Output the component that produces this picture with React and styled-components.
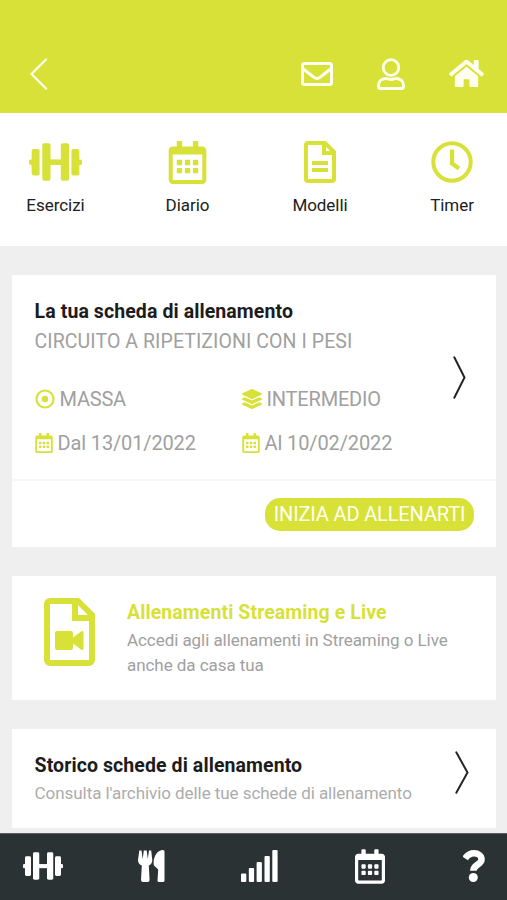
import React from 'react';
import styled, { createGlobalStyle } from 'styled-components';
import {
  FaHome,
  FaLayerGroup,
  FaRegCalendarAlt,
  FaRegEnvelope,
} from 'react-icons/fa';

const lime = '#d8e138';

const GlobalStyle = createGlobalStyle`
  * { box-sizing: border-box; }
  body { margin: 0; background: #efefef; font-family: Roboto, "Liberation Sans", sans-serif; }
  svg { display: block; flex: none; }
`;

const Screen = styled.div`
  width: 507px;
  height: 900px;
  display: flex;
  flex-direction: column;
  overflow: hidden;
  background: #efefef;
`;

const TopBar = styled.header`
  height: 113px;
  padding: 34px 23px 0 30px;
  display: flex;
  align-items: center;
  justify-content: space-between;
  flex: none;
  background: ${lime};
  color: #fffff0;
`;

const TopActions = styled.div`
  display: grid;
  grid-template-columns: 32px 28px 35px;
  column-gap: 44px;
  align-items: center;
  justify-items: center;
`;

const Shortcuts = styled.nav`
  height: 133px;
  flex: none;
  display: grid;
  grid-template-columns: 111px 153px 112px 152px;
  padding-top: 27px;
  background: #fff;
`;

const Shortcut = styled.div`
  display: flex;
  flex-direction: column;
  align-items: center;
  gap: 11px;
  color: #202020;
  font-size: 17px;
  line-height: 20px;
  letter-spacing: -0.05px;
`;

const ShortcutIcon = styled.div`
  height: 44px;
  display: flex;
  align-items: center;
  color: ${lime};
`;

const Cards = styled.main`
  flex: 1;
  padding: 29px 11px 0 12px;
  display: flex;
  flex-direction: column;
  gap: 29px;
  min-height: 0;
`;

const Card = styled.section`
  height: ${(p) => p.$height}px;
  flex: none;
  background: #fff;
`;

const PlanBody = styled.div`
  height: 206px;
  border-bottom: 2px solid #f8f8f8;
  padding: 24px 30px 0 22.600px;
  display: flex;
  justify-content: space-between;
`;

const PlanArrow = styled.div`
  padding-top: 57px;
`;

const Title = styled.h2`
  margin: 0;
  font-size: 19.500px;
  line-height: 26px;
  font-weight: 700;
  letter-spacing: ${(p) => p.$spacing || 0}px;
  color: ${(p) => p.$color || '#1c1c1c'};
  white-space: nowrap;
`;

const Subtitle = styled.div`
  margin-top: 4px;
  font-size: 19.500px;
  line-height: 26px;
  letter-spacing: 0.08px;
  color: #a0a0a0;
  white-space: nowrap;
`;

const Details = styled.div`
  margin-top: 31px;
  display: grid;
  grid-template-columns: 207px auto;
  row-gap: 18px;
`;

const Detail = styled.div`
  display: flex;
  align-items: center;
  gap: 5px;
  height: 26px;
  color: #a0a0a0;
  font-size: 20px;
  letter-spacing: ${(p) => p.$spacing || 0}px;
  white-space: nowrap;
  svg { color: ${lime}; }
`;

const SmallCalendar = styled(FaRegCalendarAlt)`
  width: 18px;
  height: 20px;
`;

const PlanFooter = styled.div`
  height: 66px;
  padding: 0 22px 0 0;
  display: flex;
  align-items: center;
  justify-content: flex-end;
`;

const StartButton = styled.button`
  width: 209px;
  height: 33px;
  padding: 0;
  border: 0;
  border-radius: 15px;
  background: ${lime};
  color: #fffff0;
  font: 400 20px/32px Roboto, "Liberation Sans", sans-serif;
  letter-spacing: -0.14px;
  white-space: nowrap;
`;

const StreamingBody = styled.div`
  padding: 22px 0 0 32px;
  display: flex;
  gap: 32px;
  color: ${lime};
`;

const StreamingText = styled.div`
  padding-top: 2px;
`;

const Description = styled.p`
  margin: 2px 0 0;
  font-size: 17px;
  line-height: 25px;
  letter-spacing: -0.06px;
  color: ${(p) => p.$color || '#a0a0a0'};
  white-space: nowrap;
`;

const ArchiveBody = styled.div`
  height: 99px;
  padding: 24px 27px 0 22.600px;
  display: flex;
  justify-content: space-between;
`;

const ArchiveArrow = styled.div`
  margin-top: -2px;
`;

const TabBar = styled.nav`
  height: 67px;
  flex: none;
  border-top: 1px solid #56605f;
  padding: 0 22px 2px 23px;
  display: grid;
  grid-template-columns: 115px 103px 114px 108px 22px;
  align-items: center;
  background: #2a3234;
  color: #fff;
`;

const TabCalendar = styled(FaRegCalendarAlt)`
  width: 30px;
  height: 35px;
`;

const Dumbbell = ({ width, height }) => (
  <svg width={width} height={height} viewBox="0 0 160 116" preserveAspectRatio="none" fill="currentColor">
    <rect x="0" y="50" width="12" height="17" rx="5" />
    <rect x="8" y="18" width="24" height="81" rx="6" />
    <rect x="40" y="1" width="25" height="114" rx="6" />
    <rect x="62" y="50" width="38" height="17" />
    <rect x="96" y="1" width="25" height="114" rx="6" />
    <rect x="128" y="18" width="24" height="81" rx="6" />
    <rect x="148" y="50" width="12" height="17" rx="5" />
  </svg>
);

const BackChevron = () => (
  <svg width="18" height="32" viewBox="0 0 18 32" fill="none" stroke="currentColor" strokeWidth="2.200" strokeLinecap="round">
    <path d="M16 1.500 1.500 16 16 30.500" />
  </svg>
);

const ForwardChevron = ({ width }) => (
  <svg width={width} height="43" viewBox={`0 0 ${width} 43`} fill="none" stroke="#242424" strokeWidth="2" strokeLinecap="round">
    <path d={`M1.300 1.300 ${width - 1.5} 21.500 1.300 41.700`} />
  </svg>
);

const UserOutline = () => (
  <svg width="28" height="32" viewBox="0 0 28 32" fill="none" stroke="currentColor" strokeWidth="2.8">
    <circle cx="14" cy="9.500" r="7.800" />
    <path d="M8.500 20.500c2 0 3 1 5.500 1s3.500-1 5.500-1c4.200 0 7 3.200 7 7v1.500c0 .9-.6 1.500-1.500 1.500H3c-.9 0-1.500-.6-1.500-1.500v-1.500c0-3.800 2.800-7 7-7Z" />
  </svg>
);

const FileLines = () => (
  <svg width="32" height="42" viewBox="0 0 32 42" fill="none" stroke="currentColor" strokeWidth="4">
    <path d="M4 2h17l9 9v27a2 2 0 0 1-2 2H4a2 2 0 0 1-2-2V4a2 2 0 0 1 2-2Z" strokeLinejoin="round" />
    <path d="M20 2v10h10M8 22h16M8 29h16" />
  </svg>
);

const Clock = () => (
  <svg width="42" height="42" viewBox="0 0 42 42" fill="none" stroke="currentColor" strokeWidth="4">
    <circle cx="21" cy="21" r="18.700" />
    <path d="M21 8.500v14l7 5" strokeWidth="4.300" />
  </svg>
);

const Target = () => (
  <svg width="20" height="20" viewBox="0 0 20 20" fill="none" stroke="currentColor" strokeWidth="2.200">
    <circle cx="10" cy="10" r="8.500" />
    <circle cx="10" cy="10" r="3.200" fill="currentColor" stroke="none" />
  </svg>
);

const VideoFile = () => (
  <svg width="51" height="68" viewBox="0 0 51 68" fill="none" stroke="currentColor" strokeWidth="6">
    <path d="M6 3h28l14 14v45a3 3 0 0 1-3 3H6a3 3 0 0 1-3-3V6a3 3 0 0 1 3-3Z" strokeLinejoin="round" />
    <path d="M31 3v17h17" />
    <path d="M13 33h14q2 0 2 2v4.500l8-6q2.500-1.500 2.500 1v16q0 2.500-2.500 1l-8-6V50q0 2-2 2H13q-2 0-2-2V35q0-2 2-2Z" fill="currentColor" stroke="none" />
  </svg>
);

const Cutlery = () => (
  <svg width="27" height="32" viewBox="0 0 27 32" fill="currentColor">
    <path d="M1.300.5h2.200L4.700 9 5.800.5h2.900L9.800 9 11 .5h2.200L14.300 10c0 3-1.500 4.500-3.500 5.500l.8 14.500q0 2-2 2h-4.600q-2 0-2-2l.8-14.500C1.500 14.500 0 13 0 10Z" />
    <path d="M25 0q1.500 0 1.500 1.500v29q0 1.500-1.500 1.500h-4q-1.500 0-1.500-1.500l.7-11-3.700-3.500q-1-1-.9-3.500C15.900 5 20 0 25 0Z" />
  </svg>
);

const SignalBars = () => (
  <svg width="37" height="32" viewBox="0 0 37 32" fill="currentColor">
    <rect x="0" y="23.500" width="5.300" height="8.500" rx="1" />
    <rect x="7.800" y="18" width="5.300" height="14" rx="1" />
    <rect x="15.600" y="12" width="5.300" height="20" rx="1" />
    <rect x="23.500" y="6" width="5.300" height="26" rx="1" />
    <rect x="31.300" y="0" width="5.300" height="32" rx="1" />
  </svg>
);

const QuestionMark = () => (
  <svg width="22" height="32" viewBox="0 0 22 32" fill="none" stroke="currentColor" strokeWidth="6.600">
    <path d="M2.200 8.400C4.500 5 7 3.300 11 3.300c4.200 0 7.500 2.600 7.500 6.100 0 5.200-8.200 5-8.200 11.400" strokeLinejoin="round" />
    <circle cx="10.300" cy="27.500" r="4.500" fill="currentColor" stroke="none" />
  </svg>
);

export default function App() {
  return (
    <>
      <GlobalStyle />
      <Screen>
        <TopBar>
          <BackChevron />
          <TopActions>
            <FaRegEnvelope size={32} />
            <UserOutline />
            <FaHome size={35} />
          </TopActions>
        </TopBar>

        <Shortcuts>
          <Shortcut>
            <ShortcutIcon><Dumbbell width={53} height={38} /></ShortcutIcon>
            Esercizi
          </Shortcut>
          <Shortcut>
            <ShortcutIcon><FaRegCalendarAlt size={43} /></ShortcutIcon>
            Diario
          </Shortcut>
          <Shortcut>
            <ShortcutIcon><FileLines /></ShortcutIcon>
            Modelli
          </Shortcut>
          <Shortcut>
            <ShortcutIcon><Clock /></ShortcutIcon>
            Timer
          </Shortcut>
        </Shortcuts>

        <Cards>
          <Card $height={272}>
            <PlanBody>
              <div>
                <Title $spacing={0.09}>La tua scheda di allenamento</Title>
                <Subtitle>CIRCUITO A RIPETIZIONI CON I PESI</Subtitle>
                <Details>
                  <Detail $spacing={-0.25}><Target />MASSA</Detail>
                  <Detail $spacing={-0.2}><FaLayerGroup size={20} />INTERMEDIO</Detail>
                  <Detail $spacing={-0.15}><SmallCalendar />Dal 13/01/2022</Detail>
                  <Detail $spacing={-0.12}><SmallCalendar />Al 10/02/2022</Detail>
                </Details>
              </div>
              <PlanArrow><ForwardChevron width={13} /></PlanArrow>
            </PlanBody>
            <PlanFooter>
              <StartButton>INIZIA AD ALLENARTI</StartButton>
            </PlanFooter>
          </Card>

          <Card $height={124}>
            <StreamingBody>
              <VideoFile />
              <StreamingText>
                <Title $spacing={0.09} $color={lime}>Allenamenti Streaming e Live</Title>
                <Description>
                  Accedi agli allenamenti in Streaming o Live<br />anche da casa tua
                </Description>
              </StreamingText>
            </StreamingBody>
          </Card>

          <Card $height={99}>
            <ArchiveBody>
              <div>
                <Title $spacing={0.09}>Storico schede di allenamento</Title>
                <Description $color="#acacac">Consulta l'archivio delle tue schede di allenamento</Description>
              </div>
              <ArchiveArrow><ForwardChevron width={14} /></ArchiveArrow>
            </ArchiveBody>
          </Card>
        </Cards>

        <TabBar>
          <Dumbbell width={40} height={28} />
          <Cutlery />
          <SignalBars />
          <TabCalendar />
          <QuestionMark />
        </TabBar>
      </Screen>
    </>
  );
}
